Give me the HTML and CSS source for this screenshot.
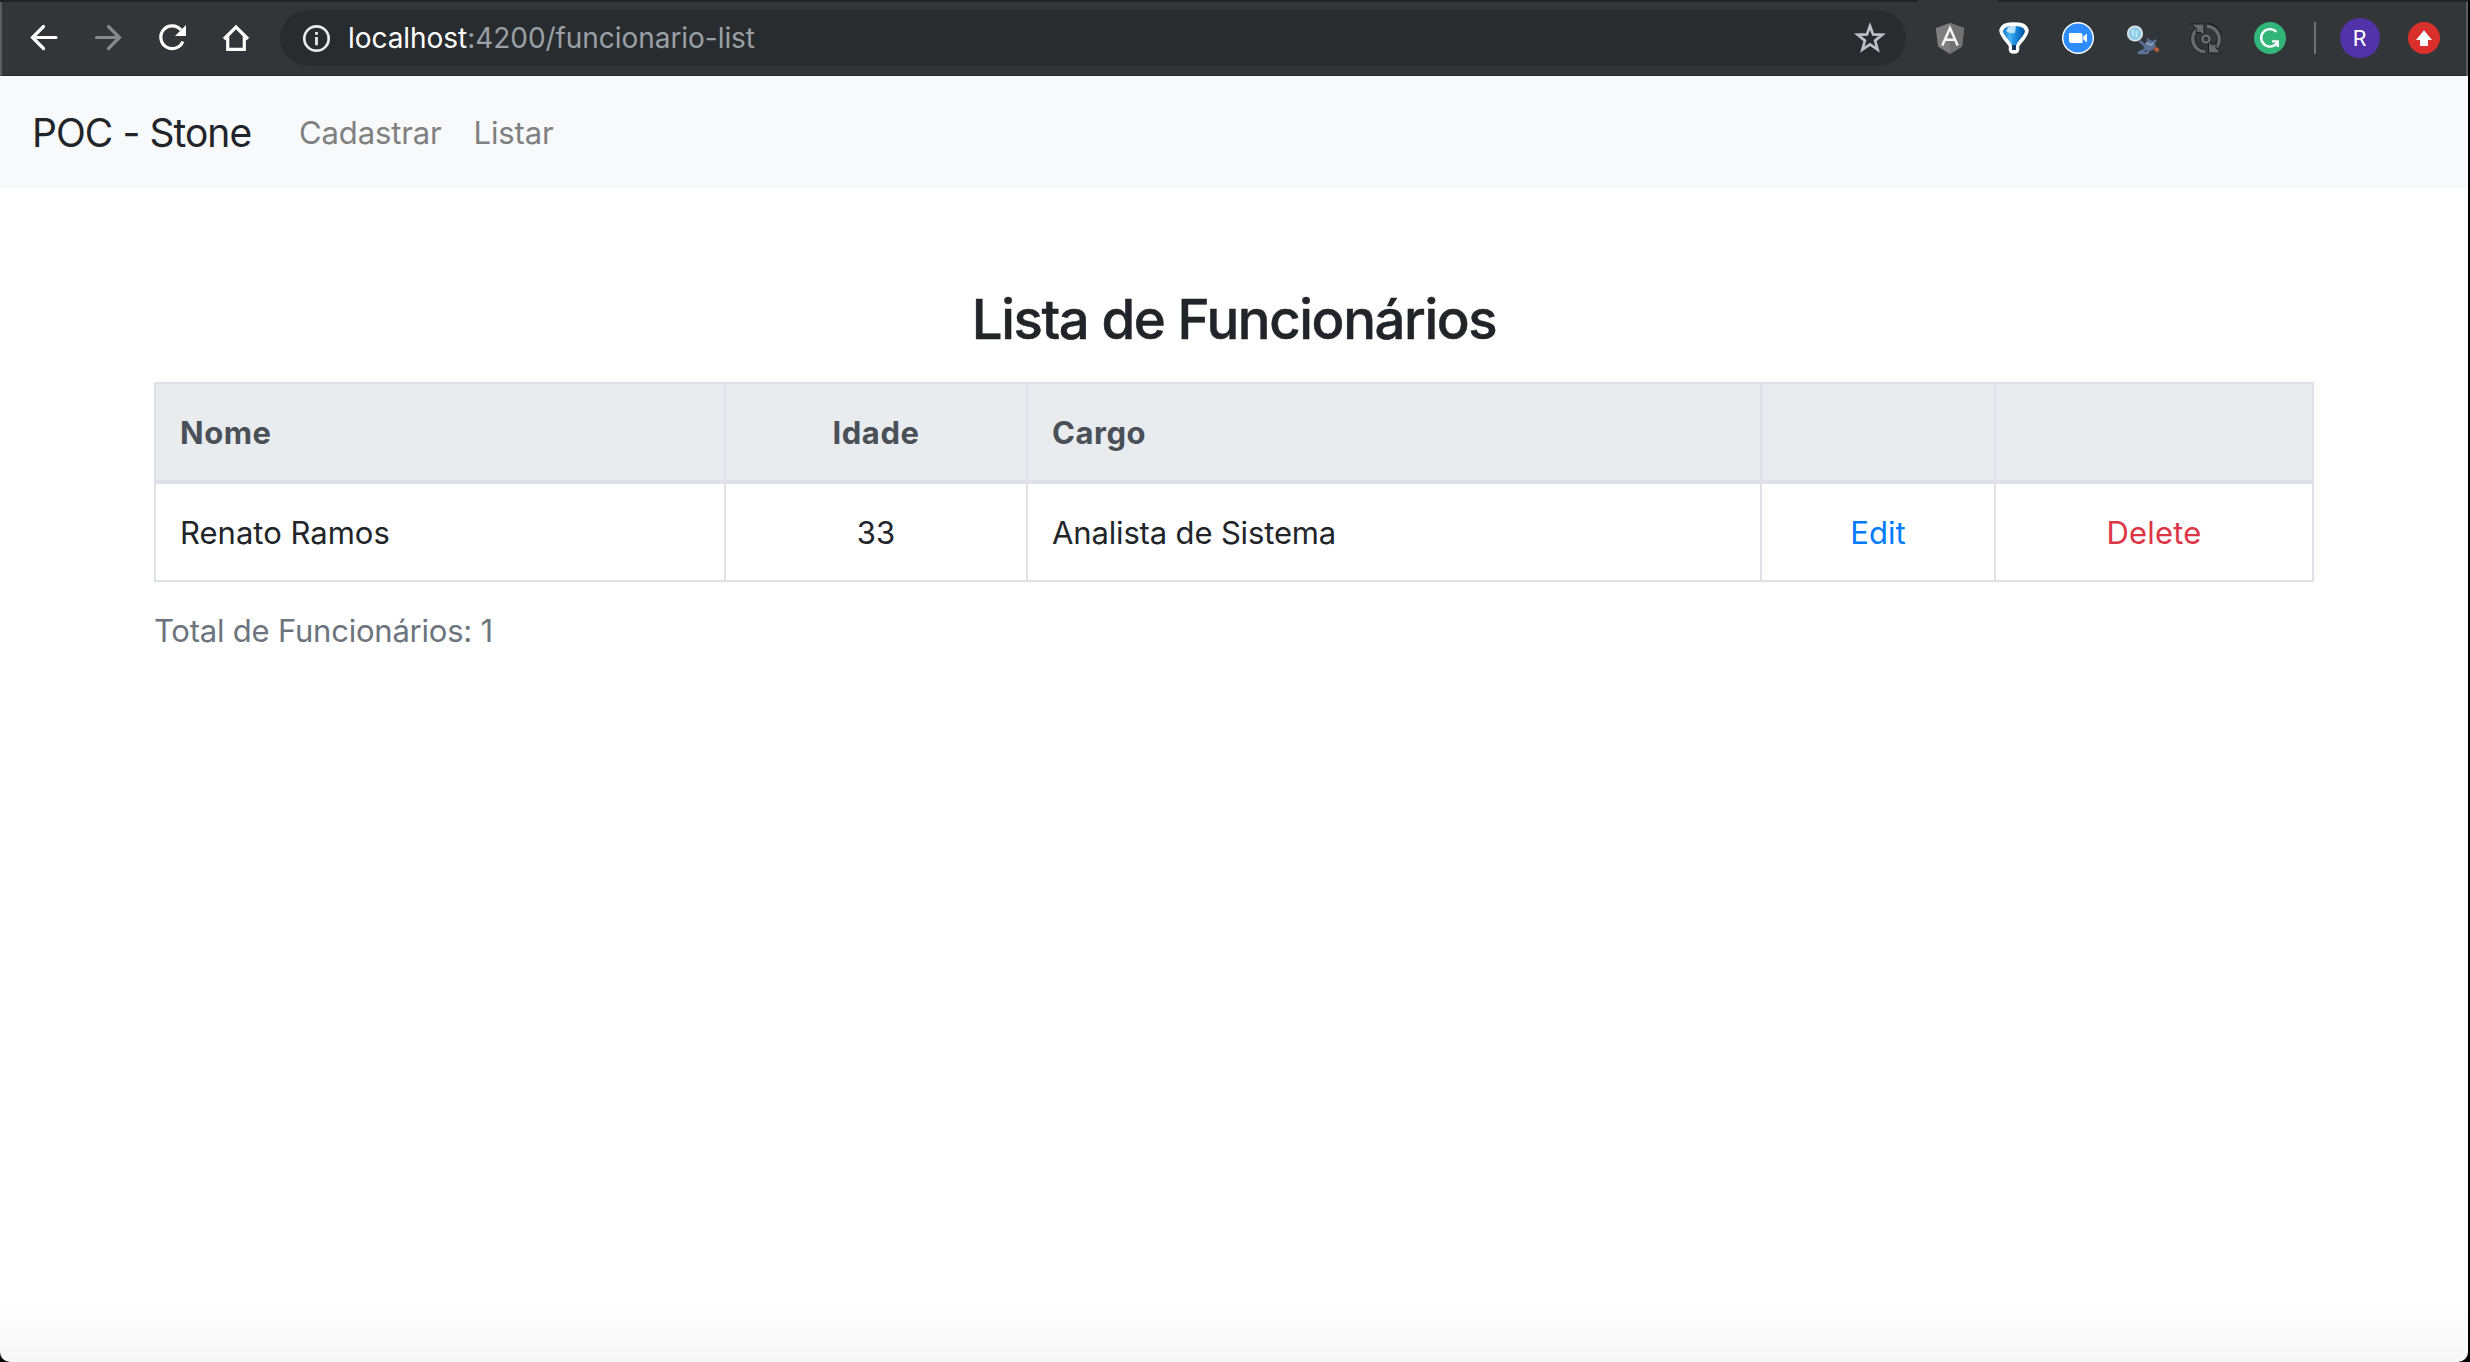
FILE: index.html
```
<!DOCTYPE html>
<html lang="pt-BR">
<head>
<meta charset="utf-8">
<title>POC - Stone</title>
<link rel="stylesheet" href="styles.css">
</head>
<body>
<div class="window">
  <header class="toolbar">
    <svg class="tool" viewBox="0 0 64 76" fill="none" stroke="#fff" stroke-width="3.2" stroke-linecap="round"><path d="M44 37.5H20.5M31.500 26.500L20.500 37.500L31.500 48.500"/></svg>
    <svg class="tool" viewBox="0 0 64 76" fill="none" stroke="#85898b" stroke-width="3.2" stroke-linecap="round"><path d="M20.500 37.500H43.500M32.500 26.500L43.500 37.500L32.500 48.500"/></svg>
    <svg class="tool" viewBox="0 0 64 76"><path d="M41 30A11.400 11.400 0 1 0 42.800 41.500" fill="none" stroke="#fff" stroke-width="3.200" stroke-linecap="butt"/><path d="M46 25V36H35Z" fill="#fff"/></svg>
    <svg class="tool" viewBox="0 0 64 76" fill="none" stroke="#fff" stroke-width="3.200"><path d="M20 39L32 27L44 39M23.700 36V49.400H40.300V36"/></svg>
    <div class="address">
      <svg class="info" viewBox="0 0 28 28"><circle cx="14.500" cy="14.500" r="12.200" fill="none" stroke="#e8eaed" stroke-width="2.700"/><path d="M13.100 8h2.800v2.800h-2.800zM13.100 13.100h2.800v8.200h-2.800z" fill="#e8eaed"/></svg>
      <span class="url"><span class="host">localhost</span>:4200/funcionario-list</span>
      <svg class="star" viewBox="0 0 32 32"><path d="M16 4L19.100 12.400L28.300 12.800L21.100 18.600L23.600 27.600L16 22.500L8.400 27.600L10.900 18.600L3.700 12.800L12.900 12.400Z" fill="none" stroke="#bdc1c6" stroke-width="2.700"/></svg>
    </div>
    <svg class="tool" viewBox="0 0 64 76"><path d="M32 23L46.200 28L44 46.500L32 54L20 46.500L17.800 28Z" fill="#7e7e7e"/><path d="M32 23L46.200 28L44 46.500L32 54Z" fill="#727272"/><path d="M24.300 45.500L32 28L39.700 45.500M27.200 39.800H36.800" fill="none" stroke="#f4f4f4" stroke-width="2.500"/></svg>
    <svg class="tool" viewBox="0 0 64 76">
      <defs><linearGradient id="balloon" x1="0" y1="0" x2="1" y2="0"><stop offset="0" stop-color="#0f74c6"/><stop offset=".3" stop-color="#4fb4f2"/><stop offset=".55" stop-color="#1b8ce0"/><stop offset="1" stop-color="#06519f"/></linearGradient></defs>
      <path d="M18.500 30C20.500 24 26 23.500 32 23.500S43.500 24 45.500 30C46 36 37 43 36 46V50Q35.500 52.500 32 52.500T28 50V46C27 43 18 36 18.500 30Z" fill="#fff" stroke="#fff" stroke-width="2.500"/>
      <path d="M21 31C22.500 26.500 27 26 32 26S41.500 26.500 43 31C42.500 36 35 41 34 46H30C29 41 21.500 36 21 31Z" fill="url(#balloon)"/>
      <path d="M27 27Q31 25 34 26.500L33 33Q28 34 24 31Z" fill="#e8f7ff" opacity=".75"/>
      <path d="M30 45h4v5h-4z" fill="#12345f"/>
    </svg>
    <svg class="tool" viewBox="0 0 64 76"><circle cx="32" cy="38" r="16" fill="#fff"/><circle cx="32" cy="38" r="14.600" fill="#2d8cff"/><path d="M23 33H34.500Q36.500 33 36.500 35V43H25Q23 43 23 41ZM37.300 36.500L41 33.500V42.500L37.300 39.500Z" fill="#fff"/></svg>
    <svg class="tool" viewBox="0 0 64 76">
      <path d="M32 42L35 44L38 39.500L43 41L46 46L42 50.500L36 50L33 46Z" fill="#5b7196"/><path d="M29.500 41L33 44M36 49L28 53H37L39 50M39 42L38 38.500M43 43L46 40" stroke="#5b7196" stroke-width="2.500" fill="none"/><path d="M36 43L41 45L43 43" stroke="#93a6c6" fill="none" stroke-width="1.500"/><path d="M44.500 48L48.500 51" stroke="#b65a39" stroke-width="4"/>
      <circle cx="25" cy="33.500" r="7.200" fill="#8fcde9" stroke="#d9e3e6" stroke-width="1.800"/><path d="M23 30V36M26.500 31V37" stroke="#c4ecfa" stroke-width="1.700"/>
    </svg>
    <svg class="tool" viewBox="0 0 64 76" fill="none">
      <g stroke="#191b1c" stroke-width="5"><path d="M31 51.800A12.800 12.800 0 0 1 23 29.500M33 25.200A12.800 12.800 0 0 1 41 47.500"/></g>
      <g stroke="#67696a" stroke-width="3.600"><path d="M31 51.800A12.800 12.800 0 0 1 23 29.500M33 26.200A12.800 12.800 0 0 1 41 48.500"/></g>
      <path d="M17 24H30V36L26 32L22 33L23 29Z" fill="#67696a" stroke="#191b1c"/><path d="M47 53H34.500V41L38 45L42 43L42 48Z" fill="#67696a" stroke="#191b1c"/><circle cx="32" cy="39" r="3.500" stroke="#7d7f80" stroke-width="1.700"/>
    </svg>
    <svg class="tool" viewBox="0 0 64 76"><circle cx="32" cy="38" r="16" fill="#31b579"/><path d="M38.300 32A8.700 8.700 0 1 0 39.300 42.400M34 41.400H39.800V47" fill="none" stroke="#fff" stroke-width="2.400"/></svg>
    <span class="divider"></span>
    <span class="account"><span class="avatar">R</span></span>
    <svg class="tool" viewBox="0 0 64 76"><circle cx="32" cy="38" r="16" fill="#d9302c"/><path d="M32 30.200L40 40H36V46H28V40H24Z" fill="#fff"/></svg>
    <span class="tab-strip"></span><span class="tab-strip tab-strip-end"></span>
  </header>
  <nav class="navbar">
    <a class="brand">POC - Stone</a>
    <a class="nav-link">Cadastrar</a>
    <a class="nav-link">Listar</a>
  </nav>
  <main class="container">
    <h2 class="title">Lista de Funcionários</h2>
    <table class="table">
      <colgroup><col class="col-name"><col class="col-age"><col class="col-role"><col class="col-edit"><col class="col-delete"></colgroup>
      <thead><tr><th>Nome</th><th class="center">Idade</th><th>Cargo</th><th></th><th></th></tr></thead>
      <tbody><tr><td>Renato Ramos</td><td class="center">33</td><td class="role">Analista de Sistema</td><td class="center"><a class="edit">Edit</a></td><td class="center"><a class="delete">Delete</a></td></tr></tbody>
    </table>
    <p class="total">Total de Funcionários: 1</p>
  </main>
</div>
</body>
</html>
```
FILE: styles.css
```
* { box-sizing: border-box; }
html { background: #000; }
body {
  margin: 0;
  font-family: Inter, "Liberation Sans", sans-serif;
  font-size: 31px;
  line-height: 48px;
  color: #212529;
}
.window {
  width: 2468px;
  height: 1362px;
  overflow: hidden;
  border-radius: 0 0 10px 10px;
  background: linear-gradient(#fff 1300px, #f7f7f7 1362px);
}
.toolbar {
  position: relative;
  display: flex;
  align-items: center;
  height: 76px;
  padding-left: 10px;
  background: #323639;
  border: solid #5b5e61;
  border-width: 0 2px;
  box-shadow: inset 0 -1px #26242a;
}
.tool { flex: none; width: 64px; height: 76px; }
.tab-strip {
  position: absolute;
  top: 0;
  left: -2px;
  width: 1918px;
  height: 2px;
  background: #202124;
  border-radius: 0 0 4px 0;
}
.tab-strip-end { left: 1996px; width: 470px; }
.address {
  flex: none;
  display: flex;
  align-items: center;
  width: 1626px;
  height: 56px;
  margin: 0 12px;
  padding: 0 20px 0 22px;
  border-radius: 28px;
  background: #282c2f;
}
.info { width: 28px; height: 28px; margin-right: 18px; overflow: visible; }
.url { flex: 1; font-size: 28px; letter-spacing: -0.05px; color: #9aa0a6; }
.host { color: #fff; }
.star { width: 32px; height: 32px; }
.divider { flex: none; width: 2px; height: 32px; margin: 0 12px; background: #6e7173; }
.account { flex: none; display: flex; justify-content: center; width: 64px; }
.avatar {
  width: 40px;
  height: 40px;
  padding-right: 1px;
  border-radius: 50%;
  background: #5132a8;
  color: #fff;
  font: 22px/41px Roboto, sans-serif;
  text-align: center;
}
.navbar {
  display: flex;
  align-items: center;
  height: 112px;
  padding: 0 32px;
  background: #f8f9fa;
}
.brand { width: 251px; padding-top: 1px; margin-right: 16px; font-size: 39px; letter-spacing: -0.95px; white-space: nowrap; }
.nav-link { padding-top: 1px; margin-right: 32px; letter-spacing: -0.13px; color: #7f8080; }
.container { width: 2160px; margin: 0 auto; padding-top: 98px; }
.title {
  margin: 0 0 29px;
  font-size: 54.5px;
  font-weight: 500;
  line-height: 67px;
  letter-spacing: -1.4px;
  text-align: center;
  -webkit-text-stroke: 0.5px currentColor;
}
.table { width: 2160px; table-layout: fixed; border-collapse: collapse; }
.col-name { width: 570px; }
.col-age { width: 302px; }
.col-role { width: 734px; }
.col-edit { width: 234px; }
.col-delete { width: 318px; }
.table th, .table td { height: 99px; padding: 25px 24px 23px; border: 2px solid #dee2e6; text-align: left; }
.table th { background: #e9ecef; border-bottom-width: 4px; font-weight: 700; letter-spacing: 0.55px; color: #495057; }
.table .center { text-align: center; }
.role { letter-spacing: -0.15px; }
.edit { color: #007bff; }
.delete { color: #dc3545; letter-spacing: 0.2px; }
.total { margin: 25px 0 0; letter-spacing: -0.22px; color: #6c757d; }
```
